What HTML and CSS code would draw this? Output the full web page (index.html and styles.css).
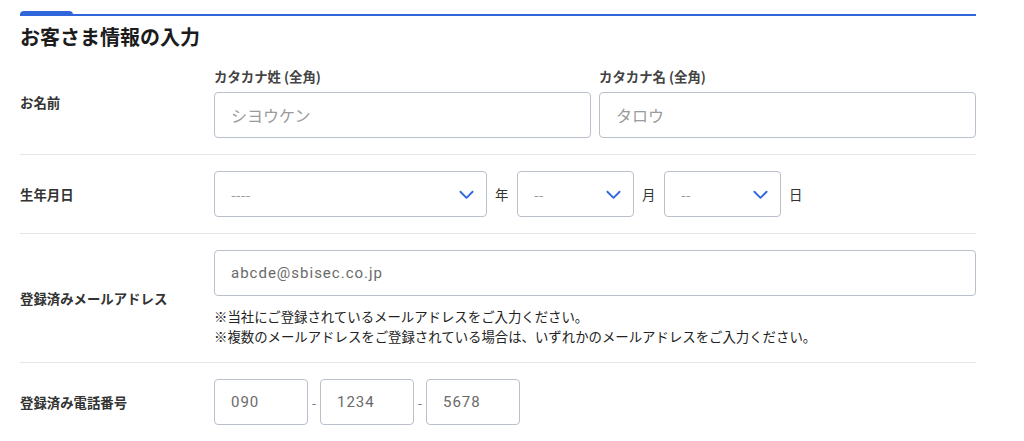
FILE: index.html
```html
<!DOCTYPE html>
<html lang="ja">
<head>
	<meta charset="UTF-8">
	<meta name="viewport" content="width=device-width, initial-scale=1.0">
	<title>お客さま情報の入力</title>
	<link rel="stylesheet" href="styles.css">
</head>
<body>

 <section class="form-box">
 	<h2 class="form-title">お客さま情報の入力</h2>

 	<!-- nama -->
 	<div class="row">
 		<div class="row-label">お名前</div>
 		<div class="row-body name-fields">
 			<div class="field">
 				<label class="sub-label">カタカナ姓 (全角)</label>
 				<input class="text-input kana" type="text" placeholder="シヨウケン">
 			</div>
 			<div class="field">
 				<label class="sub-label">カタカナ名 (全角)</label>
 				<input class="text-input kana" type="text" placeholder="タロウ">
 			</div>
 		</div>
 	</div>

 	<!-- tanggal lahir -->
 	<div class="row">
 		<div class="row-label">生年月日</div>
 		<div class="row-body date-fields">
 			<div class="select-box year">
 				<select><option>----</option></select>
 				<svg class="chevron" viewBox="0 0 16 10"><path d="M1.5 1.5 L8 8 L14.5 1.5" /></svg>
 			</div>
 			<span class="unit">年</span>
 			<div class="select-box">
 				<select><option>--</option></select>
 				<svg class="chevron" viewBox="0 0 16 10"><path d="M1.5 1.5 L8 8 L14.5 1.5" /></svg>
 			</div>
 			<span class="unit">月</span>
 			<div class="select-box">
 				<select><option>--</option></select>
 				<svg class="chevron" viewBox="0 0 16 10"><path d="M1.5 1.5 L8 8 L14.5 1.5" /></svg>
 			</div>
 			<span class="unit">日</span>
 		</div>
 	</div>

 	<!-- email -->
 	<div class="row">
 		<div class="row-label">登録済みメールアドレス</div>
 		<div class="row-body">
 			<input class="text-input latin" type="text" placeholder="abcde@sbisec.co.jp">
 			<p class="note">※当社にご登録されているメールアドレスをご入力ください。<br>※複数のメールアドレスをご登録されている場合は、いずれかのメールアドレスをご入力ください。</p>
 		</div>
 	</div>

 	<!-- telepon -->
 	<div class="row">
 		<div class="row-label">登録済み電話番号</div>
 		<div class="row-body tel-fields">
 			<input class="text-input latin tel" type="text" placeholder="090">
 			<span class="dash">-</span>
 			<input class="text-input latin tel" type="text" placeholder="1234">
 			<span class="dash">-</span>
 			<input class="text-input latin tel" type="text" placeholder="5678">
 		</div>
 	</div>
 </section>

</body>
</html>
```

FILE: styles.css
```css
* {
	margin: 0;
	padding: 0;
	box-sizing: border-box;
}

body {
	font-family: "Noto Sans CJK JP", sans-serif;
	background-color: #fff;
	color: #222;
}

/*kotak form*/
.form-box {
	position: relative;
	margin: 14px 48px 0 20px;
	border-top: 2px solid #2f66dc;
}

/*tab biru di kiri atas*/
.form-box::before {
	content: "";
	position: absolute;
	left: 0;
	top: -5px;
	width: 53px;
	height: 5px;
	background-color: #2f66dc;
	border-radius: 4px 4px 0 0;
}

.form-title {
	padding-top: 8px;
	font-size: 20px;
	line-height: 26px;
	font-weight: 700;
	color: #1c1c1c;
}

/*baris*/
.row {
	display: flex;
	align-items: center;
	padding: 16px 0;
	border-bottom: 1px solid #e3e5ea;
}

.row-label {
	width: 194px;
	flex-shrink: 0;
	font-size: 13.4px;
	font-weight: 700;
	color: #333;
}

.row-body {
	flex: 1;
}

.name-fields {
	display: flex;
	gap: 8px;
}

.field {
	flex: 1;
	display: flex;
	flex-direction: column;
}

.sub-label {
	font-size: 13.4px;
	line-height: 20px;
	font-weight: 700;
	color: #444;
	margin-bottom: 6px;
}

/*input*/
.text-input {
	display: block;
	width: 100%;
	height: 46px;
	padding: 0 16px;
	border: 1px solid #b9bfcb;
	border-radius: 4px;
	background-color: #fff;
	font-family: "Noto Sans CJK JP", sans-serif;
	font-size: 16px;
	color: #333;
	outline: none;
}

.text-input.kana::placeholder {
	color: #9b9b9b;
}

.text-input.latin {
	font-family: Roboto, "Noto Sans CJK JP", sans-serif;
	font-size: 15px;
	letter-spacing: 1px;
}

.text-input.latin::placeholder {
	color: #6a6a6a;
}

.note {
	margin-top: 10px;
	font-size: 13.4px;
	line-height: 20px;
	color: #222;
}

/*tanggal*/
.date-fields {
	display: flex;
	align-items: center;
	gap: 8px;
}

.select-box {
	position: relative;
	width: 117px;
	height: 46px;
}

.select-box.year {
	width: 273px;
}

.select-box select {
	appearance: none;
	-webkit-appearance: none;
	width: 100%;
	height: 100%;
	padding: 0 16px;
	border: 1px solid #b9bfcb;
	border-radius: 4px;
	background-color: #fff;
	font-family: "Noto Sans CJK JP", sans-serif;
	font-size: 14px;
	color: #9b9b9b;
	outline: none;
}

/*panah dropdown diatas select*/
.chevron {
	position: absolute;
	right: 13px;
	top: 19px;
	width: 15px;
	height: 10px;
	fill: none;
	stroke: #2f66dc;
	stroke-width: 2;
	stroke-linecap: round;
	stroke-linejoin: round;
	pointer-events: none;
}

.unit {
	width: 14px;
	font-size: 13.4px;
	color: #333;
}

/*telepon*/
.tel-fields {
	display: flex;
	align-items: center;
}

.text-input.tel {
	width: 94px;
}

.dash {
	width: 12px;
	text-align: center;
	font-size: 13px;
	color: #777;
}
```
